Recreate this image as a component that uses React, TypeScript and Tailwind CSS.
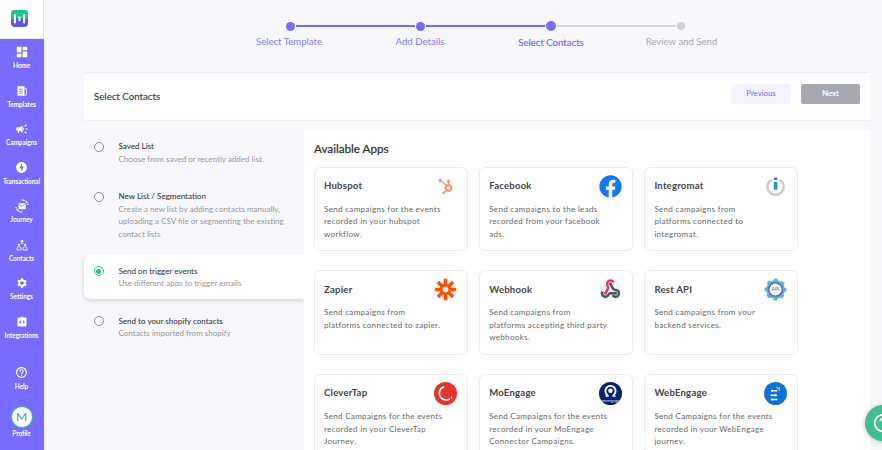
import type { ReactNode } from "react";
import {
  MdCampaign,
  MdDashboard,
  MdHelpOutline,
  MdIntegrationInstructions,
  MdOfflineBolt,
  MdSettings,
} from "react-icons/md";
import { FaFacebook, FaHubspot } from "react-icons/fa";

function BrandMark() {
  return (
    <svg viewBox="0 0 17 17" className="size-[17px]">
      <rect width="17" height="17" rx="4" fill="#5b57e0" />
      <path d="M0 9.500V4a4 4 0 0 1 4-4h9a4 4 0 0 1 4 4v5.500c-2.500 0-3.500-1.500-5.500-1.500-1.600 0-1.600 1.300-3 1.300S7.100 8 5.500 8C3.500 8 2.500 9.500 0 9.500z" fill="#22c58b" />
      <path d="M3.900 5v7.400M13.100 5v7.400M8.500 7.200v3" stroke="#fff" strokeWidth="2.200" strokeLinecap="round" />
    </svg>
  );
}

function TemplatesIcon() {
  return (
    <svg viewBox="0 0 12 12" className="size-3">
      <path d="M2.200 1.300h6.300v9.500H2.600A1.200 1.200 0 0 1 1.400 9.600V2.100a.8.8 0 0 1 .8-.8z" fill="#fff" />
      <path d="M8.500 3.700h1.900v6a1 1 0 0 1-1.900 0" fill="none" stroke="#fff" strokeWidth=".9" />
      <path d="M3 4.300h3.800M3 6.200h3.800M3 8.100h3.800" stroke="#786bff" strokeWidth=".8" />
    </svg>
  );
}

function JourneyIcon() {
  return (
    <svg viewBox="0 0 14 14" className="size-3.5 shrink-0">
      <rect x="3.500" y="4.200" width="7.200" height="6" rx=".6" fill="#fff" />
      <path d="m4.200 5.300 2.900 2.200L10 5.300" fill="none" stroke="#786bff" strokeWidth=".8" />
      <path d="M6.500 1c3.300-.2 5.800 1.500 6.500 5M7.500 13C4.200 13.200 1.700 11.500 1 8" fill="none" stroke="#fff" strokeWidth="1.200" strokeDasharray="3.200 .7" />
    </svg>
  );
}

function ContactsIcon() {
  return (
    <svg viewBox="0 0 12 12" className="size-3">
      <g fill="#fff">
        <circle cx="6" cy="2.200" r="1.400" />
        <circle cx="2.800" cy="5.800" r="1.100" />
        <circle cx="9.200" cy="5.800" r="1.100" />
      </g>
      <path d="M4.400 4.800c.6-.8 2.600-.8 3.200 0M1 11V9c0-1.800 4-1.800 4 0v2zM7 11V9c0-1.800 4-1.800 4 0v2z" fill="none" stroke="#fff" strokeWidth=".8" />
    </svg>
  );
}

const nav: { label: string; icon: ReactNode }[] = [
  { label: "Home", icon: <MdDashboard size={14} /> },
  { label: "Templates", icon: <TemplatesIcon /> },
  { label: "Campaigns", icon: <MdCampaign size={14} /> },
  { label: "Transactional", icon: <MdOfflineBolt size={13} /> },
  { label: "Journey", icon: <JourneyIcon /> },
  { label: "Contacts", icon: <ContactsIcon /> },
  { label: "Settings", icon: <MdSettings size={12} /> },
  { label: "Integrations", icon: <MdIntegrationInstructions size={12} /> },
];

function NavItem({ label, icon }: { label: string; icon: ReactNode }) {
  return (
    <a className="flex h-[38.500px] w-full flex-col items-center text-[6.500px] leading-[8px] font-bold tracking-[-0.080px] whitespace-nowrap">
      <span className="flex h-[14px] items-center justify-center">{icon}</span>
      <span className="mt-[3px]">{label}</span>
    </a>
  );
}

function Sidebar() {
  return (
    <aside className="flex w-11 shrink-0 flex-col bg-[#786bff] text-white">
      <div className="flex h-[38.500px] shrink-0 items-center justify-center border-r border-b border-[#e4e4ec] bg-white pr-1">
        <BrandMark />
      </div>
      <nav className="flex flex-col items-center pt-[6.500px] pr-px">
        {nav.map((n) => (
          <NavItem key={n.label} {...n} />
        ))}
      </nav>
      <div className="flex flex-col items-center pt-[12.500px] pr-px">
        <NavItem label="Help" icon={<MdHelpOutline size={13} />} />
        <span className="mt-[2px] flex size-[22px] items-center justify-center rounded-full border border-[#25c195] bg-white text-[12px] leading-none text-[#3a9c92]">
          M
        </span>
        <span className="mt-[2px] text-[6.500px] leading-[8px] font-bold tracking-[-0.080px]">Profile</span>
      </div>
    </aside>
  );
}

function Stepper() {
  return (
    <div className="ml-[181px] w-[520px] pt-[21px]">
      <div className="flex h-[10px] items-center justify-center gap-[1px]">
        <span className="size-[9px] rounded-full bg-[#786bff]" />
        <span className="h-[2px] w-[119px] bg-[#786bff]" />
        <span className="size-[9px] rounded-full bg-[#786bff]" />
        <span className="h-[2px] w-[119px] bg-[#786bff]" />
        <span className="size-[10px] rounded-full bg-[#786bff]" />
        <span className="h-[2px] w-[119px] bg-[#d9d9dc]" />
        <span className="size-[8px] rounded-full bg-[#d3d3d6]" />
      </div>
      <div className="mt-[5px] grid grid-cols-4 text-center text-[9.600px] leading-[12px] text-[#887dfa]">
        <span className="pr-[2px]">Select Template</span>
        <span>Add Details</span>
        <span className="pt-px pl-[2px] text-[#7468f0] [-webkit-text-stroke:0.150px]">Select Contacts</span>
        <span className="pl-[3px] text-[#a8a8ac]">Review and Send</span>
      </div>
    </div>
  );
}

function Header() {
  return (
    <header className="mt-[23px] ml-10 flex h-[49px] w-[786px] shrink-0 justify-between border-y border-[#efeff3] bg-white pl-[10px]">
      <h1 className="pt-[17px] text-[9.700px] leading-[12px] text-[#333] [-webkit-text-stroke:0.100px]">Select Contacts</h1>
      <div className="flex gap-[10px] pt-[11px] pr-[10px] text-[7.800px]">
        <button className="h-5 w-[60px] rounded-[2px] bg-[#f4f2ff] pb-px text-[#786bff]">Previous</button>
        <button className="h-5 w-[59px] rounded-[2px] bg-[#a8a8b0] text-white [-webkit-text-stroke:0.150px]">Next</button>
      </div>
    </header>
  );
}

const options = [
  { title: "Saved List", lines: ["Choose from saved or recently added list"], box: "h-[50px]" },
  {
    title: "New List / Segmentation",
    lines: ["Create a new list by adding contacts manually,", "uploading a CSV file or segmenting the existing", "contact lists"],
    box: "h-[74.500px]",
  },
  {
    title: "Send on trigger events",
    lines: ["Use different apps to trigger emails"],
    box: "h-[45px] rounded-l-[7px] bg-white shadow-[0_2px_4px_rgba(0,0,0,0.14)]",
    selected: true,
  },
  { title: "Send to your shopify contacts", lines: ["Contacts imported from shopify"], box: "mt-[5px] h-[50px]" },
];

function OptionList() {
  return (
    <div className="-mt-[0.500px] -ml-2 box-content w-[220px] shrink-0 overflow-hidden pl-2">
      {options.map((o) => (
        <label key={o.title} className={`flex gap-[15px] pt-[10.500px] pl-[9.500px] ${o.box}`}>
          <span
            className={`mt-[1.500px] flex size-[10px] shrink-0 items-center justify-center rounded-full border bg-white ${
              o.selected ? "border-[#35c89a]" : "border-[#8c8c8c]"
            }`}
          >
            {o.selected && <span className="size-[5px] rounded-full bg-[#1dbf8a]" />}
          </span>
          <span className="text-[8.040px] leading-[12.500px] whitespace-nowrap text-[#979799]">
            <span className="block text-[#3c3c3c] [-webkit-text-stroke:0.080px]">{o.title}</span>
            {o.lines.map((l) => (
              <span key={l} className="block">
                {l}
              </span>
            ))}
          </span>
        </label>
      ))}
    </div>
  );
}

function IntegromatLogo() {
  return (
    <svg viewBox="0 0 23 23" className="size-[23px]">
      <path d="M7.500 4.900a8 8 0 1 0 8 0" fill="none" stroke="#ccc" strokeWidth="2.500" />
      <rect x="9.800" y="2.500" width="3.600" height="2.500" fill="#2f8fbd" />
      <rect x="9.800" y="7" width="3.600" height="7.800" fill="#2f8fbd" />
    </svg>
  );
}

function ZapierLogo() {
  return (
    <svg viewBox="0 0 23 23" className="size-[23px]">
      <path
        d="M11.500 .8v7M11.500 15.200v7M.8 11.500h7M15.200 11.500h7M3.900 3.900l4.800 4.800M14.300 14.300l4.800 4.800M3.900 19.100l4.800-4.800M14.300 8.700l4.800-4.800"
        stroke="#ff4f00"
        strokeWidth="3.500"
      />
      <circle cx="11.500" cy="11.500" r="4.300" fill="none" stroke="#ff4f00" strokeWidth="2.800" />
    </svg>
  );
}

function WebhookLogo() {
  return (
    <svg viewBox="0 0 27 27" className="size-[23px]" fill="none" strokeWidth="2.900">
      <circle cx="13.500" cy="13.500" r="13" fill="#f2f2f3" />
      <g transform="translate(1.500 1)">
        <path d="M18 16.980h-5.990c-1.100 0-1.950.94-2.480 1.900A4 4 0 0 1 2 17c.01-.7.2-1.400.57-2" stroke="#47565f" />
        <path d="m12 6 3.130 5.730C15.660 12.700 16.900 13 18 13a4 4 0 1 1-3.500 6" stroke="#47565f" />
        <path d="m6 17 3.130-5.780c.53-.97.1-2.180-.5-3.100a4 4 0 1 1 6.890-4.060" stroke="#e9316f" />
        <circle cx="12" cy="6" r="1.700" fill="#47565f" />
        <circle cx="6" cy="17" r="1.700" fill="#e9316f" />
        <circle cx="18" cy="17" r="1.700" fill="#47565f" />
      </g>
    </svg>
  );
}

function ApiLogo() {
  return (
    <svg viewBox="0 0 23 23" className="size-[23px]">
      <circle cx="11.500" cy="11.500" r="9.700" fill="none" stroke="#58b3d9" strokeWidth="2.400" strokeDasharray="3.810 3.810" strokeDashoffset="1.900" />
      <circle cx="11.500" cy="11.500" r="9.400" fill="#58b3d9" />
      <circle cx="11.500" cy="11.500" r="6.700" fill="#fff" stroke="#5b58a8" strokeWidth="1.300" />
      <text x="11.500" y="13.300" textAnchor="middle" fontSize="5" fontWeight="700" fill="#8378f5">
        API
      </text>
    </svg>
  );
}

function CleverTapLogo() {
  return (
    <svg viewBox="0 0 23 23" className="size-[23px]">
      <circle cx="11.500" cy="11.500" r="11.500" fill="#e5332f" />
      <path d="M9.600 4.900C4.500 7 4 13.500 8 16.500c2.400 1.800 5.300 1.800 7.600.4" fill="none" stroke="#fff" strokeWidth="1.700" strokeLinecap="round" />
      <circle cx="17.600" cy="15.400" r=".8" fill="#fff" />
    </svg>
  );
}

function MoEngageLogo() {
  return (
    <svg viewBox="0 0 23 23" className="size-[23px]">
      <circle cx="11.500" cy="11.500" r="11.500" fill="#06216f" />
      <path d="M8.600 13.200a5.100 5.100 0 1 1 5.800 0" fill="none" stroke="#fff" strokeWidth="1.900" />
      <path d="M6.500 14h3.300M13.200 14h3.300" stroke="#fff" strokeWidth="1.300" />
      <circle cx="11.500" cy="8.700" r="2.200" fill="#fff" />
      <text x="11.500" y="19.800" textAnchor="middle" fontSize="3.800" fontWeight="700" fill="#b8c4e8">
        moengage
      </text>
    </svg>
  );
}

function WebEngageLogo() {
  return (
    <svg viewBox="0 0 23 23" className="size-[23px]">
      <circle cx="11.500" cy="11.500" r="11.500" fill="#1070d4" />
      <path d="M7.200 8.800h6M6.500 13.300h6M7 17.500h6.500" stroke="#fff" strokeWidth="1.500" />
      <path d="m9 7.200-2.500 1.600L9 10.300zM11 11.700l2.500 1.600L11 14.800zM9 16l-2.500 1.500L9 19z" fill="#fff" />
      <path d="m12.500 5.300 3.500 3M15 5.200l.8 1.500" stroke="#fff" strokeWidth="1" />
    </svg>
  );
}

const apps: { name: string; lines: string[]; logo: ReactNode }[] = [
  {
    name: "Hubspot",
    lines: ["Send campaigns for the events", "recorded in your hubspot", "workflow."],
    logo: (
      <span className="flex size-[23px] items-center justify-center">
        <FaHubspot size={15} color="#ff8a62" stroke="#ff8a62" strokeWidth={12} />
      </span>
    ),
  },
  {
    name: "Facebook",
    lines: ["Send campaigns to the leads", "recorded from your facebook", "ads."],
    logo: <FaFacebook size={23} color="#1877f2" />,
  },
  { name: "Integromat", lines: ["Send campaigns from", "platforms connected to", "integromat."], logo: <IntegromatLogo /> },
  { name: "Zapier", lines: ["Send campaigns from", "platforms connected to zapier."], logo: <ZapierLogo /> },
  { name: "Webhook", lines: ["Send campaigns from", "platforms accepting third party", "webhooks."], logo: <WebhookLogo /> },
  { name: "Rest API", lines: ["Send campaigns from your", "backend services."], logo: <ApiLogo /> },
  { name: "CleverTap", lines: ["Send Campaigns for the events", "recorded in your CleverTap", "Journey."], logo: <CleverTapLogo /> },
  { name: "MoEngage", lines: ["Send Campaigns for the events", "recorded in your MoEngage", "Connector Campaigns."], logo: <MoEngageLogo /> },
  { name: "WebEngage", lines: ["Send Campaigns for the events", "recorded in your WebEngage", "journey."], logo: <WebEngageLogo /> },
];

function AppGrid() {
  return (
    <section className="h-[420px] w-[566px] shrink-0 bg-white pt-[10px] pl-[10px]">
      <h2 className="text-[11.700px] leading-4 text-[#2b2b2b] [-webkit-text-stroke:0.200px]">Available Apps</h2>
      <div className="mt-[10.500px] grid grid-cols-[repeat(3,154px)] gap-x-[11.200px] gap-y-[19.250px]">
        {apps.map((a) => (
          <article key={a.name} className="h-[84.500px] rounded-[6px] border border-[#ececef] pt-[7px] pr-[10px] pl-[9px]">
            <div className="flex h-[23px] items-center justify-between">
              <h3 className="text-[9.600px] font-bold tracking-[0.200px] text-[#444]">{a.name}</h3>
              {a.logo}
            </div>
            <p className="mt-[5px] text-[8px] leading-[12.500px] tracking-[0.330px] whitespace-nowrap text-[#666]">
              {a.lines.map((l) => (
                <span key={l} className="block">
                  {l}
                </span>
              ))}
            </p>
          </article>
        ))}
      </div>
    </section>
  );
}

export default function App() {
  return (
    <div className="relative flex h-[450px] w-[882px] overflow-hidden bg-[#f7f7fc] font-['Lato',sans-serif]">
      <Sidebar />
      <main className="flex min-w-0 flex-1 flex-col">
        <Stepper />
        <Header />
        <div className="mt-[9px] ml-10 flex">
          <OptionList />
          <AppGrid />
        </div>
      </main>
      <button className="absolute top-[405px] left-[865px] flex size-9 items-center justify-center rounded-full bg-[#41bd93] text-white shadow-[0_1px_5px_rgba(0,0,0,0.25)]">
        <MdHelpOutline size={22} />
      </button>
    </div>
  );
}
